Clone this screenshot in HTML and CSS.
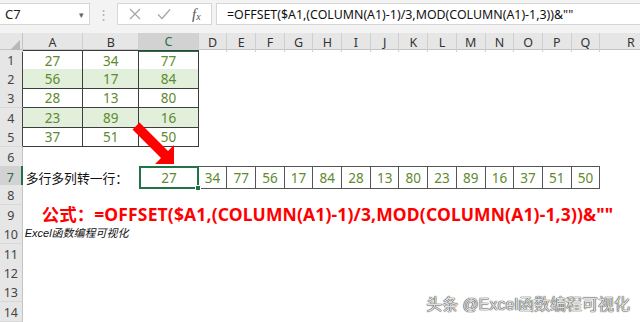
FILE: index.html
```html
<!DOCTYPE html>
<html lang="zh">
<head>
<meta charset="utf-8">
<title>Excel</title>
<link rel="stylesheet" href="styles.css">
</head>
<body>
<div class="app">
  <div class="fbar">
    <div class="namebox"><span>C7</span><span class="caret">&#9662;</span></div>
    <div class="grip">&#8942;</div>
    <div class="btns">
      <svg class="ico" width="14" height="14" viewBox="0 0 14 14"><path d="M2 2L12 12M12 2L2 12" stroke="#a6a6a6" stroke-width="1.3" fill="none"/></svg>
      <svg class="ico" width="16" height="14" viewBox="0 0 16 14"><path d="M2 7.5L6 11.5L14 2.5" stroke="#a6a6a6" stroke-width="1.3" fill="none"/></svg>
      <span class="fx">f<sub>x</sub></span>
    </div>
    <div class="formula">=OFFSET($A1,(COLUMN(A1)-1)/3,MOD(COLUMN(A1)-1,3))&amp;""</div>
  </div>

  <div class="sheet">
    <div class="row hdr">
      <div class="corner"><span class="tri"></span></div>
      <div class="ch">A</div><div class="ch">B</div><div class="ch on">C</div>
      <div class="ch">D</div><div class="ch">E</div><div class="ch">F</div><div class="ch">G</div>
      <div class="ch">H</div><div class="ch">I</div><div class="ch">J</div><div class="ch">K</div>
      <div class="ch">L</div><div class="ch">M</div><div class="ch">N</div><div class="ch">O</div>
      <div class="ch">P</div><div class="ch">Q</div><div class="ch last">R</div>
    </div>

    <div class="row"><div class="rh dk">1</div><div class="c t a top">27</div><div class="c t top">34</div><div class="c t top">77</div></div>
    <div class="row"><div class="rh dk">2</div><div class="c t a g">56</div><div class="c t g">17</div><div class="c t g">84</div></div>
    <div class="row"><div class="rh dk">3</div><div class="c t a">28</div><div class="c t">13</div><div class="c t">80</div></div>
    <div class="row"><div class="rh dk">4</div><div class="c t a g">23</div><div class="c t g">89</div><div class="c t g">16</div></div>
    <div class="row"><div class="rh dk">5</div><div class="c t a">37</div><div class="c t">51</div><div class="c t">50</div></div>
    <div class="row"><div class="rh">6</div></div>
    <div class="row">
      <div class="rh on">7</div>
      <div class="lbl">多行多列转一行：</div>
      <div class="c sel">27<span class="handle"></span></div>
      <div class="c r7">34</div><div class="c r7">77</div><div class="c r7">56</div><div class="c r7">17</div>
      <div class="c r7">84</div><div class="c r7">28</div><div class="c r7">13</div><div class="c r7">80</div>
      <div class="c r7">23</div><div class="c r7">89</div><div class="c r7">16</div><div class="c r7">37</div>
      <div class="c r7">51</div><div class="c r7">50</div>
    </div>
    <div class="row"><div class="rh">8</div></div>
    <div class="row"><div class="rh">9</div><div class="red"><span class="cn">公式：</span><span class="lat">=OFFSET($A1,(COLUMN(A1)-1)/3,MOD(COLUMN(A1)-1,3))&amp;""</span></div></div>
    <div class="row"><div class="rh">10</div><div class="note">Excel函数编程可视化</div></div>
    <div class="row"><div class="rh">11</div></div>
    <div class="row"><div class="rh">12</div></div>
    <div class="row"><div class="rh">13</div></div>
    <div class="row"><div class="rh">14</div></div>
  </div>

  <svg class="arrow" width="640" height="322" viewBox="0 0 640 322">
    <polygon points="139.5,122.5 168,151 174,145 174,164 155,164 161,158 132.5,129.5" fill="#ff0000"/>
  </svg>

  <div class="watermark">头条 @Excel函数编程可视化</div>
</div>
</body>
</html>
```

FILE: styles.css
```css
* { box-sizing: border-box; }
html, body { margin: 0; padding: 0; background: #fff; }
.app {
  position: relative;
  width: 640px;
  height: 322px;
  overflow: hidden;
  font-family: "Noto Sans", "Noto Sans CJK SC", sans-serif;
}

/* formula bar */
.fbar {
  display: flex;
  align-items: stretch;
  height: 33px;
  padding: 3px 0 8px 0;
  background: #f3f3f3;
}
.namebox {
  width: 90px;
  background: #fff;
  border: 1px solid #d6d6d6;
  border-left: none;
  display: flex;
  align-items: center;
  justify-content: space-between;
  padding: 0 5px 0 5px;
  font-size: 13px;
  color: #222;
}
.caret { font-size: 9px; color: #666; }
.grip {
  width: 27px;
  display: flex;
  align-items: center;
  justify-content: center;
  color: #b0b0b0;
  font-size: 13px;
}
.btns {
  width: 95px;
  background: #fff;
  border: 1px solid #d6d6d6;
  display: flex;
  align-items: center;
  gap: 14px;
  padding-left: 10px;
}
.fx {
  font-family: "Liberation Serif", serif;
  font-style: italic;
  font-size: 15px;
  color: #555;
  margin-left: 6px;
}
.fx sub { font-size: 10px; vertical-align: -1px; }
.formula {
  flex: 1;
  margin-left: 4px;
  background: #fff;
  border: 1px solid #d6d6d6;
  border-right: none;
  display: flex;
  align-items: center;
  padding-left: 10px;
  font-size: 12.4px;
  color: #111;
  white-space: nowrap;
}

/* sheet */
.sheet { display: flex; flex-direction: column; }
.row {
  display: grid;
  grid-template-columns: 22.7px 60.6px 56px 59.4px repeat(14, 28.7px) 61px;
  height: 19.4px;
}
.row.hdr {
  height: 16.6px;
  background: #e6e6e6;
  border-bottom: 1px solid #c4c4c4;
}
.corner {
  position: relative;
  border-right: 1px solid #c4c4c4;
}
.tri {
  position: absolute;
  right: 2px;
  bottom: 2px;
  width: 0;
  height: 0;
  border-left: 10px solid transparent;
  border-bottom: 10px solid #b8b8b8;
}
.ch {
  display: flex;
  align-items: center;
  justify-content: center;
  font-size: 12.5px;
  color: #333;
  border-right: 1px solid #cfcfcf;
}
.ch.on {
  background: #d2d2d2;
  color: #217346;
  border-bottom: 2px solid #217346;
}
.ch.last { border-right: none; }

.rh {
  background: #e6e6e6;
  border-right: 1px solid #c4c4c4;
  border-bottom: 1px solid #d8d8d8;
  display: flex;
  align-items: center;
  justify-content: center;
  padding-top: 2px;
  font-size: 12.5px;
  color: #444;
}
.rh.dk { border-right-color: #444; }
.rh.on {
  background: #d2d2d2;
  color: #217346;
  border-right: 2px solid #217346;
}

.c {
  display: flex;
  align-items: center;
  justify-content: center;
  padding-top: 1px;
  font-size: 13.5px;
  color: #5f8a2f;
}
.t {
  border-right: 1px solid #3d3d3d;
  border-bottom: 1px solid #3d3d3d;
}
.t.top { border-top: 1px solid #3d3d3d; }
.g { background: #e2efda; }

.lbl {
  grid-column: span 2;
  display: flex;
  align-items: center;
  padding: 1px 0 0 3px;
  font-family: "Noto Sans CJK SC", sans-serif;
  font-size: 12.8px;
  color: #111;
  white-space: nowrap;
}
.sel {
  position: relative;
  border: 2px solid #217346;
}
.handle {
  position: absolute;
  right: -4px;
  bottom: -4px;
  width: 6px;
  height: 6px;
  background: #217346;
  border: 1px solid #fff;
}
.r7 {
  border-top: 1px solid #555;
  border-bottom: 1px solid #555;
  border-right: 1px solid #555;
}

.red {
  grid-column: 2 / -1;
  display: flex;
  align-items: center;
  line-height: 18px;
  padding: 0 0 3px 19px;
  font-size: 17.5px;
  font-weight: bold;
  color: #ff0000;
  white-space: nowrap;
}
.red .cn {
  font-family: "Noto Sans CJK SC", sans-serif;
}
.red .lat {
  letter-spacing: 0.15px;
}
.note {
  grid-column: 2 / -1;
  display: flex;
  align-items: center;
  line-height: 14px;
  padding: 0 0 2px 2px;
  font-family: "Liberation Sans", "Noto Sans CJK SC", sans-serif;
  font-style: italic;
  font-size: 11px;
  color: #111;
  white-space: nowrap;
}

.arrow {
  position: absolute;
  left: 0;
  top: 0;
  pointer-events: none;
}
.watermark {
  position: absolute;
  right: 10px;
  bottom: 7px;
  font-family: "Liberation Sans", "Noto Sans CJK SC", sans-serif;
  font-size: 16px;
  color: #e0e0e0;
  text-shadow: 0 0 1px #222, 0 0 1px #222;
  white-space: nowrap;
}
```
